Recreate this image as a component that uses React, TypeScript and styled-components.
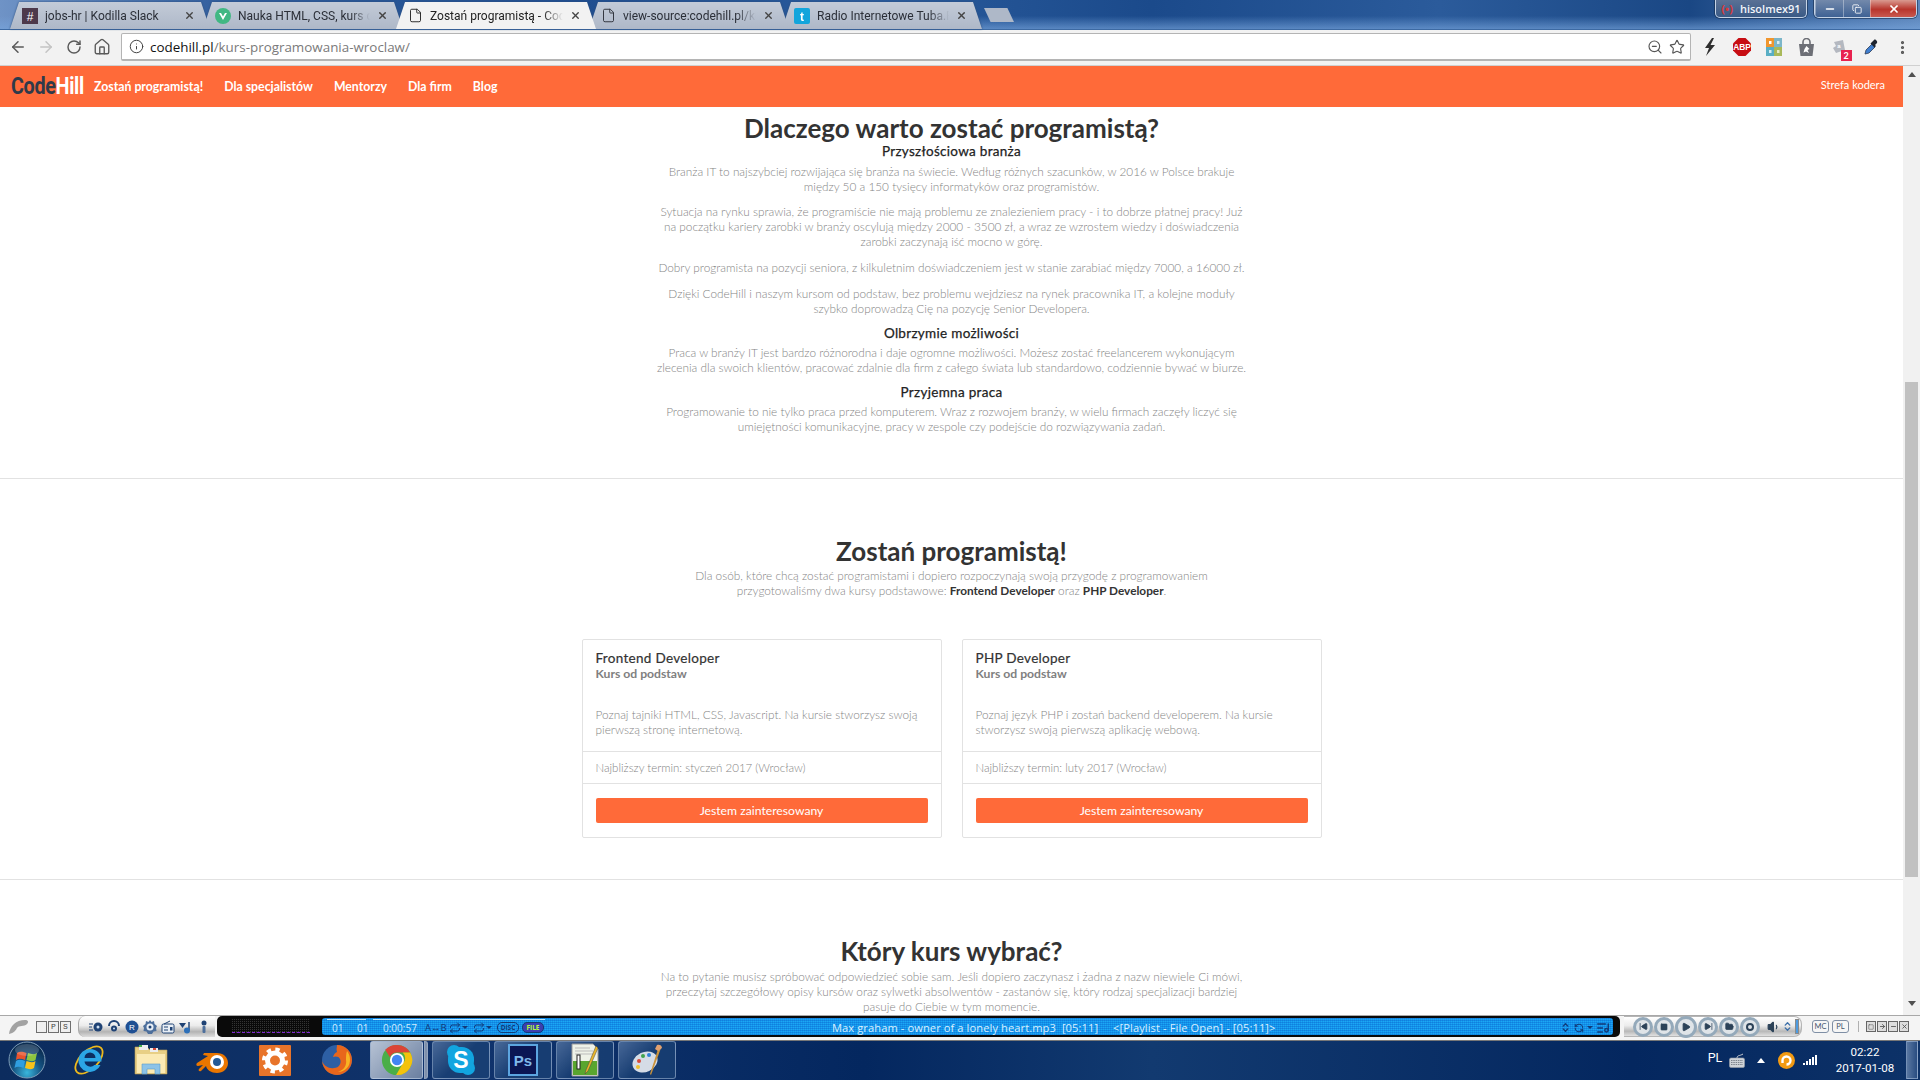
import React from "react";
import styled, { createGlobalStyle } from "styled-components";
import {
  ArrowLeft,
  ArrowRight,
  RotateCw,
  House,
  Info,
  ZoomOut,
  Star,
  EllipsisVertical,
  File,
  X,
  Minus,
  Copy,
  SkipBack,
  SkipForward,
  Square,
  Play,
  FolderOpen,
  Volume1,
  Repeat,
  ChevronsUpDown,
  RefreshCcw,
  ListMusic,
} from "lucide-react";

const GlobalStyle = createGlobalStyle`
  html, body { margin: 0; padding: 0; height: 100%; overflow: hidden; }
  body { font-family: "Lato", "Liberation Sans", sans-serif; background: #fff; }
  * { box-sizing: border-box; }
`;

const Screen = styled.div`
  width: 1920px;
  height: 1080px;
  display: flex;
  flex-direction: column;
  overflow: hidden;
`;

/* ---------- browser chrome ---------- */

const TabStrip = styled.div`
  height: 29px;
  flex: none;
  display: flex;
  align-items: flex-end;
  padding-left: 10px;
  background:
    linear-gradient(180deg, transparent 55%, rgba(120, 165, 220, 0.65) 100%),
    linear-gradient(90deg, #6f93c6 0%, #2f5c9c 12%, #1f4d8f 30%, #2a5b9c 45%, #1b4a8b 60%, #2b5b9b 75%, #1a4784 88%, #5d86bb 100%);
`;

const TabRow = styled.div`
  display: flex;
  align-items: flex-end;
  filter: drop-shadow(0 0 1px #2e4f7e);
`;

const Tab = styled.div<{ $active?: boolean }>`
  width: 200px;
  height: 27px;
  margin-right: -7px;
  padding: 0 15px 0 12px;
  display: flex;
  align-items: center;
  gap: 7px;
  font-family: "Roboto", sans-serif;
  font-size: 12px;
  color: ${(p) => (p.$active ? "#222" : "#2b2f38")};
  background: ${(p) => (p.$active ? "#f2f2f2" : "linear-gradient(180deg, #c3cbd8, #aeb8c8)")};
  clip-path: polygon(9px 0, calc(100% - 9px) 0, 100% 100%, 0 100%);
  position: relative;
  z-index: ${(p) => (p.$active ? 2 : 1)};
`;

const TabTitle = styled.span`
  flex: 1;
  white-space: nowrap;
  overflow: hidden;
  -webkit-mask-image: linear-gradient(90deg, #000 85%, transparent);
  mask-image: linear-gradient(90deg, #000 85%, transparent);
`;

const NewTab = styled.div`
  width: 30px;
  height: 14px;
  margin: 0 0 7px 9px;
  background: #aeb8c8;
  clip-path: polygon(0 0, 78% 0, 100% 100%, 22% 100%);
`;

const WindowArea = styled.div`
  margin-left: auto;
  align-self: flex-start;
  display: flex;
  gap: 7px;
  padding-right: 3px;
`;

const ProfileBadge = styled.div`
  width: 92px;
  height: 18px;
  display: flex;
  align-items: center;
  justify-content: center;
  gap: 7px;
  font-family: "Open Sans", sans-serif;
  font-size: 11px;
  font-weight: 600;
  color: #f2f5fa;
  border: 1px solid #c5d3e6;
  border-top: none;
  border-radius: 0 0 5px 5px;
  box-shadow: 0 0 0 1px rgba(20, 40, 70, 0.55);
  background: linear-gradient(180deg, #5a7195, #3a5a86);
`;

const ProfileMark = styled.span`
  color: #d8393a;
  font-weight: 700;
  font-size: 11px;
`;

const WinControls = styled.div`
  display: flex;
  height: 18px;
  border: 1px solid #c5d3e6;
  border-top: none;
  border-radius: 0 0 5px 5px;
  overflow: hidden;
  box-shadow: 0 0 0 1px rgba(20, 40, 70, 0.55);
`;

const WinButton = styled.div<{ $w: number; $close?: boolean }>`
  width: ${(p) => p.$w}px;
  display: flex;
  align-items: center;
  justify-content: center;
  color: #fff;
  border-left: 1px solid rgba(255, 255, 255, 0.35);
  background: ${(p) =>
    p.$close ? "linear-gradient(180deg, #d99a90, #b8352c 55%, #c9594f)" : "linear-gradient(180deg, #7389ab, #3f6294)"};
`;

const Toolbar = styled.div`
  height: 37px;
  flex: none;
  display: flex;
  align-items: center;
  padding: 0 8px 1px 4px;
  background: #f2f2f2;
  border-top: 1px solid #3d6aa3;
  border-bottom: 1px solid #d0d0d0;
`;

const NavIcon = styled.div<{ $muted?: boolean }>`
  width: 28px;
  display: flex;
  justify-content: center;
  color: ${(p) => (p.$muted ? "#c4c4c4" : "#5a5a5a")};
`;

const AddressBar = styled.div`
  width: 1570px;
  height: 28px;
  margin-left: 5px;
  display: flex;
  align-items: center;
  padding: 0 5px 0 7px;
  gap: 6px;
  background: #fff;
  border: 1px solid #b4b4b4;
  border-bottom-width: 2px;
  border-radius: 2px;
  font-family: "Open Sans", sans-serif;
  font-size: 13.4px;
  color: #7a7a7a;
`;

const Host = styled.span`
  color: #111;
`;

const AddressEnd = styled.div`
  margin-left: auto;
  display: flex;
  align-items: center;
  gap: 6px;
  color: #555;
`;

const Extensions = styled.div`
  display: flex;
  align-items: center;
  flex: 1;
  justify-content: space-between;
  padding-left: 10px;
  color: #444;
`;

const ExtSlot = styled.div`
  position: relative;
  display: flex;
  width: 18px;
  justify-content: center;
`;

const ExtBadge = styled.span`
  position: absolute;
  right: -4px;
  bottom: -6px;
  width: 11px;
  height: 11px;
  background: #e8224f;
  color: #fff;
  font-size: 9px;
  font-weight: 700;
  text-align: center;
  line-height: 11px;
`;

/* ---------- page ---------- */

const Viewport = styled.div`
  flex: 1;
  min-height: 0;
  display: flex;
`;

const Page = styled.div`
  flex: 1;
  min-width: 0;
  overflow: hidden;
`;

const TopNav = styled.nav`
  height: 41px;
  display: flex;
  align-items: center;
  padding: 0 18px 0 11px;
  background: #ff6a39;
  font-size: 12.3px;
  font-weight: 700;
  color: #fff;
`;

const Logo = styled.div`
  width: 83px;
  font-family: "Liberation Sans Narrow", "Roboto", sans-serif;
  font-size: 23px;
  font-weight: 700;
  letter-spacing: -0.4px;
  color: #fff;
  transform: scaleX(0.86);
  transform-origin: left center;
  white-space: nowrap;
`;

const LogoDark = styled.span`
  color: #2f3a4a;
`;

const NavLink = styled.a`
  margin-right: 21px;
`;

const NavRight = styled.a`
  margin-left: auto;
  font-size: 11px;
  font-weight: 400;
  margin-bottom: 4px;
`;

const Section = styled.section<{ $top: number; $bottom: number; $line?: boolean }>`
  padding: ${(p) => p.$top}px 0 ${(p) => p.$bottom}px;
  text-align: center;
  border-bottom: ${(p) => (p.$line ? "1px solid #e2e2e2" : "none")};
`;

const Heading = styled.h2`
  margin: 0;
  font-size: 26px;
  line-height: 26px;
  font-weight: 700;
  color: #333;
`;

const SubHeading = styled.h3<{ $first?: boolean }>`
  margin: ${(p) => (p.$first ? "0 0 3px" : "7px 0 2px")};
  font-size: 13.5px;
  line-height: 20px;
  font-weight: 400;
  letter-spacing: 0.3px;
  color: #222;
  -webkit-text-stroke: 0.25px #222;
`;

const Copy_ = styled.p<{ $gap?: number }>`
  margin: ${(p) => p.$gap ?? 0}px 0 0;
  font-size: 11.8px;
  line-height: 15px;
  font-weight: 300;
  color: #858585;
  white-space: nowrap;
`;

const Strong = styled.strong`
  color: #333;
  font-weight: 700;
`;

const Cards = styled.div`
  margin-top: 41px;
  display: flex;
  justify-content: center;
  gap: 20px;
  text-align: left;
`;

const Card = styled.div`
  width: 360px;
  height: 199px;
  border: 1px solid #e2e2e2;
  border-radius: 2px;
  display: flex;
  flex-direction: column;
`;

const CardBody = styled.div`
  height: 111px;
  padding: 9px 13px 0;
`;

const CardTitle = styled.div`
  font-size: 13.5px;
  line-height: 18px;
  font-weight: 400;
  letter-spacing: 0.3px;
  color: #333;
  -webkit-text-stroke: 0.2px #333;
`;

const CardSub = styled.div`
  font-size: 12.2px;
  line-height: 14px;
  font-weight: 700;
  color: #808080;
  margin-bottom: 26px;
`;

const CardTerm = styled.div`
  height: 33px;
  padding: 0 13px;
  display: flex;
  align-items: center;
  font-size: 11.5px;
  font-weight: 300;
  color: #858585;
  border-top: 1px solid #e2e2e2;
  border-bottom: 1px solid #e2e2e2;
`;

const CardFoot = styled.div`
  flex: 1;
  padding: 14px 13px;
`;

const CTA = styled.button`
  width: 100%;
  height: 25px;
  border: none;
  border-radius: 2px;
  background: #ff6a39;
  color: #fff;
  font-family: inherit;
  font-size: 12.2px;
  padding: 0;
`;

const Scrollbar = styled.div`
  width: 17px;
  flex: none;
  display: flex;
  flex-direction: column;
  align-items: center;
  background: #f1f1f1;
`;

const ScrollArrow = styled.div<{ $down?: boolean }>`
  width: 0;
  height: 0;
  flex: none;
  margin: ${(p) => (p.$down ? "6px 0 9px" : "6px 0")};
  border-left: 4px solid transparent;
  border-right: 4px solid transparent;
  ${(p) => (p.$down ? "border-top: 5px solid #505050;" : "border-bottom: 5px solid #505050;")}
`;

const ScrollThumb = styled.div`
  width: 13px;
  height: 495px;
  flex: none;
  margin-top: 299px;
  margin-bottom: auto;
  background: #c1c1c1;
`;

/* ---------- media player ---------- */

const Player = styled.div`
  height: 26px;
  flex: none;
  display: flex;
  align-items: center;
  padding: 0 0 3px;
  background: #f4f4f4;
  border-top: 1px solid #a8a8a8;
  border-bottom: 1px solid #777;
`;

const PlayerLogo = styled.div`
  width: 28px;
  margin-left: 8px;
  display: flex;
`;

const ModeKeys = styled.div`
  display: flex;
  gap: 1px;
  margin-right: 7px;
`;

const ModeKey = styled.span`
  width: 11px;
  height: 12px;
  border: 1px solid #6f6f6f;
  font-family: "Liberation Mono", monospace;
  font-size: 8px;
  line-height: 10px;
  text-align: center;
  color: #444;
  background: #efefef;
`;

const ToolGroup = styled.div`
  width: 137px;
  height: 21px;
  display: flex;
  align-items: center;
  gap: 4px;
  padding-left: 10px;
  border-radius: 7px 0 0 7px;
  background: linear-gradient(180deg, #fff 0%, #ececec 45%, #b4b4b4 75%, #ddd 100%);
  border-left: 1px solid #a8a8a8;
`;

const Display = styled.div`
  flex: none;
  width: 1403px;
  height: 21px;
  margin-left: 2px;
  padding: 2px 7px 2px 105px;
  background: #0a0a0a;
  border-radius: 5px;
  position: relative;
`;

const Spectrum = styled.div`
  position: absolute;
  left: 15px;
  top: 3px;
  width: 78px;
  height: 14px;
  background-image: repeating-linear-gradient(90deg, transparent 0 1px, #0a0a0a 1px 2px),
    repeating-linear-gradient(0deg, #343434 0 1px, #0a0a0a 1px 2px);
  border-bottom: 1px dashed #7d24d0;
`;

const Lcd = styled.div`
  height: 100%;
  display: flex;
  align-items: center;
  padding: 2px 0 0 10px;
  border-radius: 3px;
  position: relative;
  font-family: "Open Sans", sans-serif;
  font-size: 10px;
  color: #d3ecff;
  background-color: #1ba8f5;
  background-image: repeating-linear-gradient(0deg, rgba(0, 70, 190, 0.28) 0 1px, transparent 1px 2px),
    repeating-linear-gradient(90deg, rgba(0, 70, 190, 0.18) 0 1px, transparent 1px 2px);

  &::before,
  &::after {
    content: "";
    position: absolute;
    top: 1px;
    height: 1px;
    background: #b9e8ff;
  }
  &::before { left: 5px; width: 39px; }
  &::after { left: 51px; width: 172px; }
`;

const LcdItem = styled.span<{ $w: number }>`
  width: ${(p) => p.$w}px;
  flex: none;
  white-space: nowrap;
`;

const LcdDark = styled.span<{ $w: number }>`
  width: ${(p) => p.$w}px;
  flex: none;
  display: flex;
  align-items: center;
  gap: 1px;
  color: #123a78;
  font-size: 9.5px;
  white-space: nowrap;
`;

const Caret = styled.span`
  width: 0;
  height: 0;
  border-left: 3px solid transparent;
  border-right: 3px solid transparent;
  border-top: 3px solid #123a78;
`;

const LcdPill = styled.span<{ $file?: boolean }>`
  width: 22px;
  height: 11px;
  margin-right: 3px;
  border-radius: 5px;
  flex: none;
  text-align: center;
  font-size: 6.5px;
  line-height: 9px;
  font-weight: 700;
  border: 1px solid #123a78;
  color: ${(p) => (p.$file ? "#b4ff3a" : "#123a78")};
  background: ${(p) => (p.$file ? "#3d3fb0" : "transparent")};
`;

const Marquee = styled.span`
  flex: 1;
  padding-left: 285px;
  font-size: 11.1px;
  letter-spacing: 0.1px;
  color: #d9efff;
  white-space: pre;
`;

const LcdEnd = styled.span`
  margin-right: 3px;
  display: flex;
  align-items: center;
  gap: 3px;
  color: #123a78;
`;

const Transport = styled.div`
  width: 178px;
  height: 21px;
  margin-left: 4px;
  padding-left: 9px;
  display: flex;
  align-items: center;
  gap: 1px;
  color: #2c4258;
  border: 1px solid #b5b5b5;
  border-left: none;
  border-radius: 0 8px 8px 0;
  background: linear-gradient(180deg, #fff 0%, #ececec 45%, #b8b8b8 75%, #e0e0e0 100%);
`;

const RoundKey = styled.span<{ $big?: boolean }>`
  width: ${(p) => (p.$big ? 22 : 20)}px;
  height: ${(p) => (p.$big ? 22 : 20)}px;
  flex: none;
  display: flex;
  align-items: center;
  justify-content: center;
  border-radius: 50%;
  border: 3px solid #94a9ba;
  background: #dfe4e8;
`;

const SpeakerSlot = styled.span`
  margin-left: 6px;
  display: flex;
`;

const VolumeBar = styled.span`
  width: 4px;
  height: 15px;
  margin-left: 1px;
  background: #4d9be0;
  border: 1px solid #8a8a8a;
`;

const PillKey = styled.span<{ $ml: number }>`
  width: 17px;
  height: 13px;
  margin-left: ${(p) => p.$ml}px;
  border: 1px solid #7f8fa5;
  border-radius: 3px;
  font-size: 7.5px;
  line-height: 11px;
  text-align: center;
  color: #44556d;
  background: #f6f6f6;
`;

const SquareKeys = styled.div`
  margin-left: 9px;
  display: flex;
  gap: 1px;
  padding-left: 7px;
  border-left: 1px solid #b0b0b0;
`;

const SquareKey = styled.span`
  width: 10px;
  height: 11px;
  display: flex;
  align-items: center;
  justify-content: center;
  border: 1px solid #666;
  color: #555;
  background: #ddd;
`;

/* ---------- taskbar ---------- */

const Taskbar = styled.div`
  height: 39px;
  flex: none;
  display: flex;
  align-items: stretch;
  padding-bottom: 1px;
  background: linear-gradient(90deg, #0c2c5e 0%, #10336c 25%, #04275f 45%, #123a70 60%, #04275f 85%, #0d3268 100%);
`;

const Orb = styled.div`
  width: 54px;
  margin-right: 4px;
  display: flex;
  align-items: center;
  justify-content: center;
`;

const PinSlot = styled.div`
  width: 62px;
  flex: none;
  display: flex;
  align-items: center;
  justify-content: center;
`;

const TaskBtn = styled.div<{ $active?: boolean; $w: number; $ml: number }>`
  width: ${(p) => p.$w}px;
  flex: none;
  margin-left: ${(p) => p.$ml}px;
  display: flex;
  align-items: center;
  justify-content: center;
  border: 1px solid rgba(180, 200, 225, 0.5);
  border-radius: 3px;
  background: ${(p) =>
    p.$active
      ? "linear-gradient(135deg, #b6c2d4, #6a7fa0)"
      : "linear-gradient(135deg, rgba(120,150,190,.55), rgba(30,70,120,.6) 50%)"};
`;

const TaskStack = styled.div`
  width: 4px;
  margin-left: 1px;
  border-radius: 0 3px 3px 0;
  border: 1px solid rgba(180, 200, 225, 0.4);
  background: #7f90ab;
`;

const Tray = styled.div`
  margin-left: auto;
  display: flex;
  align-items: center;
  color: #fff;
  font-family: "Roboto", sans-serif;
  font-size: 12.5px;
`;

const TrayLang = styled.span`
  width: 22px;
  text-align: center;
  margin-bottom: 5px;
`;

const TraySlot = styled.span<{ $w: number }>`
  width: ${(p) => p.$w}px;
  display: flex;
  justify-content: center;
`;

const Clock = styled.div`
  width: 60px;
  margin-left: 13px;
  text-align: center;
  font-size: 11.6px;
  line-height: 16px;
  white-space: nowrap;
`;

const ShowDesktop = styled.div`
  align-self: stretch;
  width: 12px;
  margin: 0 2px 0 11px;
  border: 1px solid rgba(190, 210, 235, 0.5);
  background: linear-gradient(90deg, rgba(140,165,200,.6), rgba(60,95,145,.6));
`;

/* ---------- drawings ---------- */

const SlackMark = () => (
  <svg width="16" height="16" viewBox="0 0 16 16">
    <rect width="16" height="16" fill="#4d394b" />
    <text x="8" y="12.5" textAnchor="middle" fontSize="12" fontFamily="Liberation Sans" fill="#fff">#</text>
  </svg>
);

const VueMark = () => (
  <svg width="16" height="16" viewBox="0 0 16 16">
    <circle cx="8" cy="8" r="8" fill="#41b883" />
    <path d="M4 5l4 7 4-7h-2l-2 3.6L6 5z" fill="#fff" />
  </svg>
);

const TubaMark = () => (
  <svg width="16" height="16" viewBox="0 0 16 16">
    <rect width="16" height="16" rx="2" fill="#12a5dc" />
    <text x="8" y="12.5" textAnchor="middle" fontSize="12" fontWeight="700" fontFamily="Liberation Sans" fill="#fff">t</text>
  </svg>
);

const BoltMark = () => (
  <svg width="12" height="18" viewBox="0 0 12 18">
    <path d="M8 0L1 10h4l-3 8 9-11H6.500L10 0z" fill="#2f2f2f" />
  </svg>
);

const AbpMark = () => (
  <svg width="18" height="18" viewBox="0 0 18 18">
    <path d="M5.500 0h7L18 5.500v7L12.500 18h-7L0 12.500v-7z" fill="#c70d13" />
    <text x="9" y="12.300" textAnchor="middle" fontSize="8.400" fontWeight="700" fontFamily="Liberation Sans" fill="#fff">ABP</text>
  </svg>
);

const TilesMark = () => (
  <svg width="16" height="18" viewBox="0 0 16 18">
    <rect width="8" height="9" fill="#f0962e" />
    <rect x="8" width="8" height="9" fill="#7cb6c9" />
    <rect y="9" width="8" height="9" fill="#59aec4" />
    <rect x="8" y="9" width="8" height="9" fill="#a9b95a" />
    <rect x="3" y="3" width="2.500" height="3" fill="#fff" />
    <rect x="11" y="3" width="2.500" height="3" fill="#d9ecf2" />
    <rect x="3" y="12" width="2.500" height="3" fill="#d9ecf2" />
    <rect x="11" y="12" width="2.500" height="3" fill="#e6ecc8" />
  </svg>
);

const BagMark = () => (
  <svg width="17" height="18" viewBox="0 0 17 18">
    <path d="M5 6V4a3.500 3.500 0 0 1 7 0v2" fill="none" stroke="#6d6f76" strokeWidth="1.600" />
    <path d="M1 6h15l-1.500 12h-12z" fill="#6d6f76" />
    <path d="M8.500 8l3 3-2 1 1.500 3-3-1.500-2.500 1 1-3.500z" fill="#fff" />
  </svg>
);

const PuzzleMark = () => (
  <svg width="16" height="16" viewBox="0 0 16 16">
    <path d="M3 3l9-2 2 10-9 3-3-5 3-2z" fill="#b4b8c0" />
    <text x="8" y="9" textAnchor="middle" fontSize="6" fontWeight="700" fontFamily="Liberation Sans" fill="#fff">a</text>
  </svg>
);

const DropperMark = () => (
  <svg width="16" height="18" viewBox="0 0 16 18">
    <path d="M2 16l1-4 6-6 3 3-6 6z" fill="#3f7fd0" stroke="#2c3a55" strokeWidth=".8" />
    <path d="M9 4l2-2c1-1.500 4 1.500 3 3l-2 2 1 1-1.500 1.500-4-4L9 4z" fill="#1d2430" />
  </svg>
);

const PlayerSwoosh = () => (
  <svg width="21" height="16" viewBox="0 0 21 16">
    <path d="M1 15C2 7 8 1 17 1c3 0 4 2 2 4-3 3-8 1-10 4-1 2-3 5-8 6z" fill="#a2a2a2" />
  </svg>
);

const toolColor = "#1f4274";

const ToolSvg: React.FC<{ children: React.ReactNode }> = ({ children }) => (
  <svg width="14" height="14" viewBox="0 0 14 14">{children}</svg>
);

const tools = [
  <ToolSvg key="eq">
    <circle cx="9" cy="7" r="4.500" fill={toolColor} />
    <circle cx="9" cy="7" r="1.500" fill="#cfe0f2" />
    <path d="M0 4h4M0 7h3M0 10h4" stroke={toolColor} strokeWidth="1.200" />
  </ToolSvg>,
  <ToolSvg key="cap">
    <path d="M1 6a6 6 0 0 1 12 0h-2a4 4 0 0 0-8 0z" fill={toolColor} />
    <circle cx="7" cy="8.500" r="3" fill={toolColor} />
    <circle cx="7" cy="8.500" r="1" fill="#cfe0f2" />
  </ToolSvg>,
  <ToolSvg key="rec">
    <circle cx="7" cy="7" r="6.500" fill="#1e4f93" />
    <text x="7" y="10" textAnchor="middle" fontSize="8" fontFamily="Liberation Sans" fill="#fff">R</text>
  </ToolSvg>,
  <ToolSvg key="flame">
    <path d="M7 0l1.500 2L11 1l.5 3L14 6l-1 2 .5 3-3 .5L9 14H5l-1.500-2.500-3-.5L1 8 0 6l2.500-2L3 1l2.500 1z" fill="#4d6f9c" />
    <circle cx="7" cy="7" r="3.500" fill="#e8eef5" />
    <circle cx="7" cy="7" r="1.500" fill={toolColor} />
  </ToolSvg>,
  <ToolSvg key="radio">
    <rect x="1" y="4" width="12" height="9" rx="1.500" fill="#e8eef5" stroke={toolColor} />
    <path d="M3 4l6-3M3 7h4M3 10h4" stroke={toolColor} />
    <rect x="9" y="7" width="2.500" height="3.500" fill={toolColor} />
  </ToolSvg>,
  <ToolSvg key="note">
    <path d="M0 3h7L3.500 8z" fill={toolColor} />
    <path d="M10 2v8" stroke={toolColor} strokeWidth="1.400" />
    <circle cx="8" cy="10.500" r="3" fill="#2d6fb8" />
  </ToolSvg>,
  <ToolSvg key="person">
    <circle cx="7" cy="3" r="2.500" fill={toolColor} />
    <rect x="5.500" y="6" width="3" height="7" rx="1" fill="#4d6f9c" />
  </ToolSvg>,
];

const WinOrb = () => (
  <svg width="38" height="38" viewBox="0 0 38 38">
    <defs>
      <radialGradient id="orb" cx="50%" cy="85%" r="75%">
        <stop offset="0" stopColor="#39b6dc" />
        <stop offset=".55" stopColor="#14507f" />
        <stop offset="1" stopColor="#0b2c50" />
      </radialGradient>
    </defs>
    <circle cx="19" cy="19" r="18" fill="url(#orb)" stroke="#7f9db8" />
    <path d="M9 12c3-2 6-1 9.500 0l-1.500 7c-3-1-6-2-9 0z" fill="#e8532c" />
    <path d="M20 12c3 1 6 2 9 0l-1.500 7c-3 2-6 1-9 0z" fill="#8dc63f" />
    <path d="M8 20c3-2 6-1 9 0l-1.500 7c-3-1-6-2-9 0z" fill="#2f9ee0" />
    <path d="M18.500 20c3 1 6 2 9 0l-1.500 7c-3 2-6 1-9 0z" fill="#f7c21a" />
    <ellipse cx="19" cy="9" rx="12" ry="6" fill="#fff" opacity=".18" />
  </svg>
);

const IeIcon = () => (
  <svg width="34" height="34" viewBox="0 0 34 34">
    <ellipse cx="17" cy="17" rx="17" ry="9" fill="none" stroke="#eeb91c" strokeWidth="1.800" transform="rotate(-45 17 17)" />
    <path d="M18 6a11.500 11.500 0 1 0 10.500 16h-6a6 6 0 0 1-10-3.500h17C30 11 25 6 18 6zm-5.500 9a5.500 5.500 0 0 1 11 0z" fill="#2ba6e6" />
  </svg>
);

const ExplorerIcon = () => (
  <svg width="34" height="34" viewBox="0 0 34 34">
    <path d="M1 4h12l3 3h17v24H1z" fill="#e8cf85" stroke="#b79c55" strokeWidth=".6" />
    <rect x="5" y="2" width="9" height="5" fill="#eee" />
    <rect x="5" y="2" width="3" height="2" fill="#47b04b" />
    <rect x="16" y="5" width="8" height="4" fill="#eee" />
    <rect x="19" y="5" width="3" height="2" fill="#d94a3a" />
    <path d="M3 11h28v19H3z" fill="#fbeab4" />
    <path d="M8 21h18v10h-5v-5h-8v5H8z" fill="#8cc3e8" stroke="#5d9bc8" strokeWidth=".6" />
  </svg>
);

const BlenderIcon = () => (
  <svg width="34" height="28" viewBox="0 0 34 28">
    <path d="M1 17l11-7-5-1 1-2h13c6 0 11 4 11 10s-5 10-11 10c-6 0-10-3-11-7l-5 5c-2 1-3-1-2-2l4-4-5 1c-2 0-2-2-1-3z" fill="#ea7600" />
    <circle cx="21" cy="16" r="7" fill="#fff" />
    <circle cx="21" cy="16" r="4" fill="#245a96" />
  </svg>
);

const GearIcon = () => (
  <svg width="32" height="31" viewBox="0 0 32 31">
    <rect width="32" height="31" rx="1" fill="#e8742a" />
    <circle cx="16" cy="15.500" r="7.500" fill="none" stroke="#fff" strokeWidth="5" />
    <circle cx="16" cy="15.500" r="11" fill="none" stroke="#fff" strokeWidth="4" strokeDasharray="4.300 4.340" />
  </svg>
);

const FirefoxIcon = () => (
  <svg width="32" height="34" viewBox="0 0 32 34">
    <circle cx="16" cy="17" r="15" fill="#2d5fa4" />
    <path d="M16 2c9 0 15 7 15 15s-7 15-15 15C9 32 2 27 1 18c2 5 7 8 12 7 5 0 8-5 6-9-1-3-5-3-7-2 1-3 2-4 4-5-1-3 0-5 0-7z" fill="#e8661c" />
    <path d="M26 8c3 4 4 9 2 14-2 4-6 7-11 7 6-2 9-7 8-12 0-3 0-6 1-9z" fill="#f8b323" />
  </svg>
);

const ChromeIcon = () => (
  <svg width="32" height="32" viewBox="0 0 34 34">
    <circle cx="17" cy="17" r="16" fill="#4aae48" />
    <path d="M17 1a16 16 0 0 1 14 8H17a8 8 0 0 0-7.500 5L4.500 6A16 16 0 0 1 17 1z" fill="#db4437" />
    <path d="M31 9a16 16 0 0 1-15 24l7-12a8 8 0 0 0 0-12z" fill="#f4c20d" />
    <circle cx="17" cy="17" r="7.500" fill="#fff" />
    <circle cx="17" cy="17" r="5.500" fill="#4285f4" />
  </svg>
);

const SkypeIcon = () => (
  <svg width="30" height="32" viewBox="0 0 30 32">
    <circle cx="8" cy="8" r="7" fill="#12a5e0" />
    <circle cx="22" cy="24" r="7" fill="#12a5e0" />
    <rect x="2" y="3" width="26" height="26" rx="12" fill="#12a5e0" />
    <text x="15" y="24" textAnchor="middle" fontSize="23" fontWeight="700" fontFamily="Liberation Sans" fill="#fff">S</text>
  </svg>
);

const PsIcon = () => (
  <svg width="30" height="32" viewBox="0 0 30 32">
    <rect x="1" y="1" width="28" height="30" fill="#0b1654" stroke="#5ca5e0" strokeWidth="2" />
    <text x="15" y="22" textAnchor="middle" fontSize="15" fontWeight="700" fontFamily="Liberation Sans" fill="#7fb8ea">Ps</text>
  </svg>
);

const NotesIcon = () => (
  <svg width="30" height="34" viewBox="0 0 30 34">
    <path d="M2 1h21l5 5v27H2z" fill="#eef2e8" stroke="#999" />
    <rect x="3" y="18" width="24" height="14" fill="#59a62f" />
    <path d="M5 5h15M5 8h18M5 11h18" stroke="#bbb" />
    <path d="M26 3L16 27l-1 4 3-3L28 5z" fill="#e8b52a" stroke="#444" strokeWidth=".5" />
    <rect x="7" y="12" width="3" height="14" fill="#fff" stroke="#222" />
  </svg>
);

const PaintIcon = () => (
  <svg width="34" height="34" viewBox="0 0 34 34">
    <ellipse cx="15" cy="19" rx="13" ry="10" fill="#d5dce6" transform="rotate(-25 15 19)" />
    <circle cx="9" cy="18" r="2" fill="#d94a3a" />
    <circle cx="13" cy="13" r="2" fill="#3fa34d" />
    <circle cx="19" cy="12" r="2" fill="#2f80d8" />
    <circle cx="8" cy="24" r="2" fill="#f0c030" />
    <path d="M29 3l-9 28 1 1 10-27z" fill="#c9923c" />
    <path d="M27 2c2-1 5 0 5 3l-4 3-3-2z" fill="#e0a070" />
  </svg>
);

const KeyboardMark = () => (
  <svg width="16" height="15" viewBox="0 0 16 15">
    <path d="M8 5C8 2 11 3 14 1" fill="none" stroke="#c8ccd2" />
    <rect x="0.500" y="5" width="15" height="9.500" rx="1.500" fill="#cfd3d8" stroke="#9aa0a8" strokeWidth=".6" />
    <path d="M2 7.500h12M2 9.500h12M2 11.500h12" stroke="#7d838c" strokeDasharray="1.500 .8" />
  </svg>
);

const OrangeRing = () => (
  <svg width="17" height="17" viewBox="0 0 17 17">
    <circle cx="8.500" cy="8.500" r="8.500" fill="#f29a12" />
    <path d="M4.500 11V8.500a4 4 0 1 1 4 4" fill="none" stroke="#fff" strokeWidth="2.400" />
  </svg>
);

const SignalBars = () => (
  <svg width="15" height="12" viewBox="0 0 15 12">
    <rect x="0" y="9" width="2" height="2" fill="#fff" />
    <rect x="3" y="7" width="2" height="4" fill="#fff" />
    <rect x="6" y="5" width="2" height="6" fill="#fff" />
    <rect x="9" y="3" width="2" height="8" fill="#fff" />
    <rect x="12" y="1" width="2" height="10" fill="#fff" />
  </svg>
);

const TrayCaret = () => (
  <svg width="8" height="5" viewBox="0 0 8 5">
    <path d="M0 5L4 0l4 5z" fill="#fff" />
  </svg>
);

const tabs = [
  { title: "jobs-hr | Kodilla Slack", icon: <SlackMark /> },
  { title: "Nauka HTML, CSS, kurs online", icon: <VueMark /> },
  { title: "Zostań programistą - CodeHill", icon: <File size={15} strokeWidth={1.5} />, active: true },
  { title: "view-source:codehill.pl/kurs", icon: <File size={15} strokeWidth={1.5} /> },
  { title: "Radio Internetowe Tuba.FM", icon: <TubaMark /> },
];

const courses = [
  {
    title: "Frontend Developer",
    text: ["Poznaj tajniki HTML, CSS, Javascript. Na kursie stworzysz swoją", "pierwszą stronę internetową."],
    term: "Najbliższy termin: styczeń 2017 (Wrocław)",
  },
  {
    title: "PHP Developer",
    text: ["Poznaj język PHP i zostań backend developerem. Na kursie", "stworzysz swoją pierwszą aplikację webową."],
    term: "Najbliższy termin: luty 2017 (Wrocław)",
  },
];

const App: React.FC = () => (
  <Screen>
    <GlobalStyle />
    <TabStrip>
      <TabRow>
        {tabs.map((t) => (
          <Tab key={t.title} $active={t.active}>
            {t.icon}
            <TabTitle>{t.title}</TabTitle>
            <X size={11} strokeWidth={3} color="#444" />
          </Tab>
        ))}
      </TabRow>
      <NewTab />
      <WindowArea>
        <ProfileBadge>
          <ProfileMark>(•)</ProfileMark>hisolmex91
        </ProfileBadge>
        <WinControls>
          <WinButton $w={28}><Minus size={12} strokeWidth={3} /></WinButton>
          <WinButton $w={27}><Copy size={10} strokeWidth={2} /></WinButton>
          <WinButton $w={46} $close><X size={12} strokeWidth={3.5} /></WinButton>
        </WinControls>
      </WindowArea>
    </TabStrip>

    <Toolbar>
      <NavIcon><ArrowLeft size={18} strokeWidth={2} /></NavIcon>
      <NavIcon $muted><ArrowRight size={18} strokeWidth={2} /></NavIcon>
      <NavIcon><RotateCw size={16} strokeWidth={2.2} /></NavIcon>
      <NavIcon><House size={18} strokeWidth={1.8} /></NavIcon>
      <AddressBar>
        <Info size={15} strokeWidth={1.6} color="#444" />
        <span><Host>codehill.pl</Host>/kurs-programowania-wroclaw/</span>
        <AddressEnd>
          <ZoomOut size={16} strokeWidth={1.7} />
          <Star size={16} strokeWidth={1.7} />
        </AddressEnd>
      </AddressBar>
      <Extensions>
        <ExtSlot><BoltMark /></ExtSlot>
        <ExtSlot><AbpMark /></ExtSlot>
        <ExtSlot><TilesMark /></ExtSlot>
        <ExtSlot><BagMark /></ExtSlot>
        <ExtSlot><PuzzleMark /><ExtBadge>2</ExtBadge></ExtSlot>
        <ExtSlot><DropperMark /></ExtSlot>
        <ExtSlot><EllipsisVertical size={17} strokeWidth={2.5} color="#555" /></ExtSlot>
      </Extensions>
    </Toolbar>

    <Viewport>
      <Page>
        <TopNav>
          <Logo><LogoDark>Code</LogoDark>Hill</Logo>
          <NavLink>Zostań programistą!</NavLink>
          <NavLink>Dla specjalistów</NavLink>
          <NavLink>Mentorzy</NavLink>
          <NavLink>Dla firm</NavLink>
          <NavLink>Blog</NavLink>
          <NavRight>Strefa kodera</NavRight>
        </TopNav>

        <Section $top={8} $bottom={44} $line>
          <Heading>Dlaczego warto zostać programistą?</Heading>
          <SubHeading $first>Przyszłościowa branża</SubHeading>
          <Copy_>
            Branża IT to najszybciej rozwijająca się branża na świecie. Według różnych szacunków, w 2016 w Polsce brakuje<br />
            między 50 a 150 tysięcy informatyków oraz programistów.
          </Copy_>
          <Copy_ $gap={10}>
            Sytuacja na rynku sprawia, że programiście nie mają problemu ze znalezieniem pracy - i to dobrze płatnej pracy! Już<br />
            na początku kariery zarobki w branży oscylują między 2000 - 3500 zł, a wraz ze wzrostem wiedzy i doświadczenia<br />
            zarobki zaczynają iść mocno w górę.
          </Copy_>
          <Copy_ $gap={11}>
            Dobry programista na pozycji seniora, z kilkuletnim doświadczeniem jest w stanie zarabiać między 7000, a 16000 zł.
          </Copy_>
          <Copy_ $gap={11}>
            Dzięki CodeHill i naszym kursom od podstaw, bez problemu wejdziesz na rynek pracownika IT, a kolejne moduły<br />
            szybko doprowadzą Cię na pozycję Senior Developera.
          </Copy_>
          <SubHeading>Olbrzymie możliwości</SubHeading>
          <Copy_>
            Praca w branży IT jest bardzo różnorodna i daje ogromne możliwości. Możesz zostać freelancerem wykonującym<br />
            zlecenia dla swoich klientów, pracować zdalnie dla firm z całego świata lub standardowo, codziennie bywać w biurze.
          </Copy_>
          <SubHeading>Przyjemna praca</SubHeading>
          <Copy_>
            Programowanie to nie tylko praca przed komputerem. Wraz z rozwojem branży, w wielu firmach zaczęły liczyć się<br />
            umiejętności komunikacyjne, pracy w zespole czy podejście do rozwiązywania zadań.
          </Copy_>
        </Section>

        <Section $top={59} $bottom={41} $line>
          <Heading>Zostań programistą!</Heading>
          <Copy_ $gap={4}>
            Dla osób, które chcą zostać programistami i dopiero rozpoczynają swoją przygodę z programowaniem<br />
            przygotowaliśmy dwa kursy podstawowe: <Strong>Frontend Developer</Strong> oraz <Strong>PHP Developer</Strong>.
          </Copy_>
          <Cards>
            {courses.map((c) => (
              <Card key={c.title}>
                <CardBody>
                  <CardTitle>{c.title}</CardTitle>
                  <CardSub>Kurs od podstaw</CardSub>
                  <Copy_>{c.text[0]}<br />{c.text[1]}</Copy_>
                </CardBody>
                <CardTerm>{c.term}</CardTerm>
                <CardFoot><CTA>Jestem zainteresowany</CTA></CardFoot>
              </Card>
            ))}
          </Cards>
        </Section>

        <Section $top={58} $bottom={0}>
          <Heading>Który kurs wybrać?</Heading>
          <Copy_ $gap={5}>
            Na to pytanie musisz spróbować odpowiedzieć sobie sam. Jeśli dopiero zaczynasz i żadna z nazw niewiele Ci mówi,<br />
            przeczytaj szczegółowy opisy kursów oraz sylwetki absolwentów - zastanów się, który rodzaj specjalizacji bardziej<br />
            pasuje do Ciebie w tym momencie.
          </Copy_>
        </Section>
      </Page>
      <Scrollbar>
        <ScrollArrow />
        <ScrollThumb />
        <ScrollArrow $down />
      </Scrollbar>
    </Viewport>

    <Player>
      <PlayerLogo><PlayerSwoosh /></PlayerLogo>
      <ModeKeys>
        <ModeKey />
        <ModeKey>P</ModeKey>
        <ModeKey>S</ModeKey>
      </ModeKeys>
      <ToolGroup>{tools}</ToolGroup>
      <Display>
        <Spectrum />
        <Lcd>
          <LcdItem $w={25}>01</LcdItem>
          <LcdItem $w={26}>01</LcdItem>
          <LcdItem $w={42}>0:00:57</LcdItem>
          <LcdDark $w={24}>A↔B</LcdDark>
          <LcdDark $w={24}><Repeat size={12} /><Caret /></LcdDark>
          <LcdDark $w={24}><Repeat size={12} /><Caret /></LcdDark>
          <LcdPill>DISC</LcdPill>
          <LcdPill $file>FILE</LcdPill>
          <Marquee>{"Max graham - owner of a lonely heart.mp3  [05:11]     <[Playlist - File Open] - [05:11]>"}</Marquee>
          <LcdEnd>
            <ChevronsUpDown size={11} strokeWidth={3} />
            <RefreshCcw size={10} strokeWidth={2.5} />
            <Caret />
            <ListMusic size={14} strokeWidth={2.5} />
          </LcdEnd>
        </Lcd>
      </Display>
      <Transport>
        <RoundKey><SkipBack size={9} fill="#2c4258" /></RoundKey>
        <RoundKey><Square size={8} fill="#2c4258" /></RoundKey>
        <RoundKey $big><Play size={10} fill="#2c4258" /></RoundKey>
        <RoundKey><SkipForward size={9} fill="#2c4258" /></RoundKey>
        <RoundKey><FolderOpen size={9} fill="#2c4258" /></RoundKey>
        <RoundKey>
          <svg width="8" height="8" viewBox="0 0 8 8"><circle cx="4" cy="4" r="3" fill="none" stroke="#2c4258" strokeWidth="2" /></svg>
        </RoundKey>
        <SpeakerSlot><Volume1 size={14} fill="#2c4258" /></SpeakerSlot>
        <ChevronsUpDown size={11} strokeWidth={3} color="#3b6ea8" />
        <VolumeBar />
      </Transport>
      <PillKey $ml={10}>MC</PillKey>
      <PillKey $ml={3}>PL</PillKey>
      <SquareKeys>
        <SquareKey><Square size={6} strokeWidth={2} /></SquareKey>
        <SquareKey><ArrowRight size={7} strokeWidth={3} /></SquareKey>
        <SquareKey><Minus size={7} strokeWidth={3} /></SquareKey>
        <SquareKey><X size={7} strokeWidth={3} /></SquareKey>
      </SquareKeys>
    </Player>

    <Taskbar>
      <Orb><WinOrb /></Orb>
      <PinSlot><IeIcon /></PinSlot>
      <PinSlot><ExplorerIcon /></PinSlot>
      <PinSlot><BlenderIcon /></PinSlot>
      <PinSlot><GearIcon /></PinSlot>
      <PinSlot><FirefoxIcon /></PinSlot>
      <TaskBtn $w={53} $ml={2} $active><ChromeIcon /></TaskBtn>
      <TaskStack />
      <TaskBtn $w={58} $ml={4}><SkypeIcon /></TaskBtn>
      <TaskBtn $w={58} $ml={4}><PsIcon /></TaskBtn>
      <TaskBtn $w={58} $ml={4}><NotesIcon /></TaskBtn>
      <TaskBtn $w={58} $ml={4}><PaintIcon /></TaskBtn>
      <Tray>
        <TrayLang>PL</TrayLang>
        <TraySlot $w={22}><KeyboardMark /></TraySlot>
        <TraySlot $w={26}><TrayCaret /></TraySlot>
        <TraySlot $w={24}><OrangeRing /></TraySlot>
        <TraySlot $w={24}><SignalBars /></TraySlot>
        <Clock>02:22<br />2017-01-08</Clock>
        <ShowDesktop />
      </Tray>
    </Taskbar>
  </Screen>
);

export default App;
